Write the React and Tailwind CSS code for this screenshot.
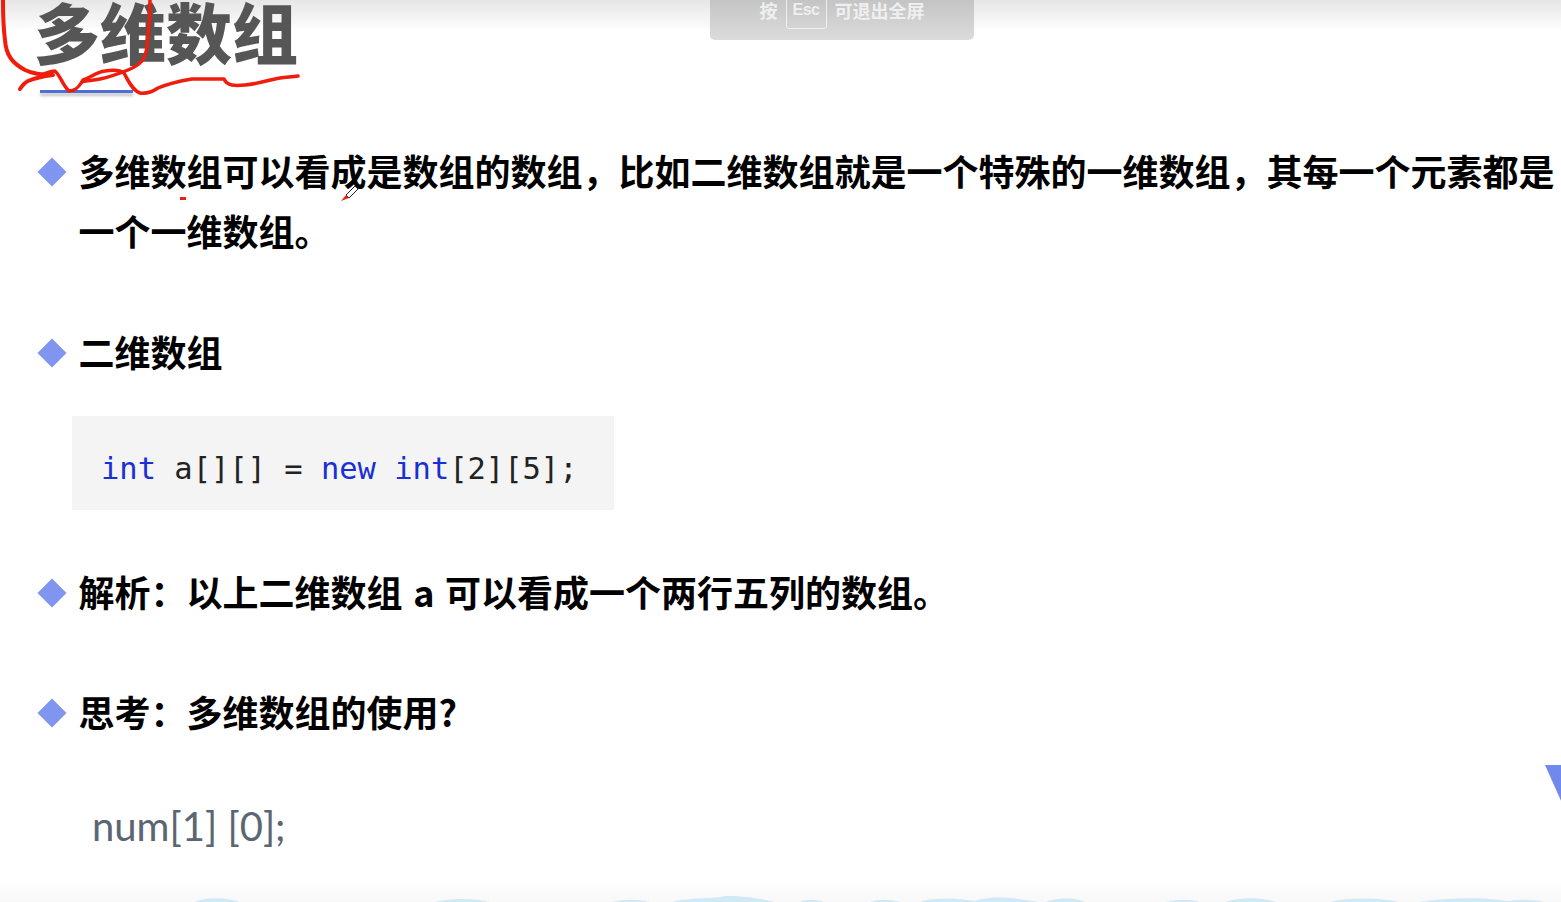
const cjk = "font-['Noto_Sans_CJK_SC','Noto_Sans',sans-serif]";

function Diamond() {
  return (
    <svg width="30" height="30" viewBox="0 0 30 30" className="shrink-0">
      <path d="M15 0.5 L29.5 15 L15 29.5 L0.5 15 Z" fill="#7f95ef" />
    </svg>
  );
}

function Bullet({ children, className = "" }) {
  return (
    <div className={"flex items-start gap-[11.5px] pl-[37px] " + className}>
      <div className="h-[60px] flex items-center shrink-0"><Diamond /></div>
      <p className="-mt-[2px] mb-[2px] text-[36px] leading-[60px] font-bold text-black [word-spacing:2.5px] whitespace-pre-wrap w-[1482px]">{children}</p>
    </div>
  );
}

function Ink() {
  return (
    <svg width="310" height="100" viewBox="0 0 310 100" className="absolute left-0 top-0" fill="none">
      <path
        d="M3 0 C3 10 3 25 5 40 C6 55 12 63 25 70 C33 74 42 75 53 75 C45 76 35 78 28 81 C24 83 22 86 20 89"
        stroke="#f01c0c" strokeWidth="4" strokeLinecap="round" strokeLinejoin="round"
      />
      <path
        d="M150 0 C150 15 149 30 147 45 C146 60 140 65 128 70 C118 74 110 77 100 79 C92 81 87 80 82 82"
        stroke="#f01c0c" strokeWidth="3.5" strokeLinecap="round" strokeLinejoin="round"
      />
      <path
        d="M40 75 C45 74 50 71 55 71 C60 75 63 86 69 91 C74 91 78 89 83 80 C90 78 96 72 105 71 C112 70 120 70 124 73 C128 80 132 90 140 93 C147 94 152 92 158 88 C170 83 180 81 192 79 C205 79 215 79 224 79 C227 86 235 86 245 85 C258 84 268 80 280 78 C287 77 293 77 298 76"
        stroke="#f01c0c" strokeWidth="3.5" strokeLinecap="round" strokeLinejoin="round"
      />
    </svg>
  );
}

function Pen() {
  return (
    <svg width="20" height="22" viewBox="0 0 20 22" className="absolute left-[340px] top-[182px]" fill="none">
      <path d="M6 13 L15 4 L18 7 L9 16 Z" fill="#fff" stroke="#222" strokeWidth="1" />
      <path d="M1 19 L6 13 L9 16 Z" fill="#ee2211" />
    </svg>
  );
}

function Waves() {
  return (
    <svg width="1561" height="6" viewBox="0 0 1561 6" className="block" fill="#cfeaf6">
      <path d="M195 6 C205 1 225 1 240 6 Z" />
      <path d="M435 6 C450 2 475 2 490 6 Z" />
      <path d="M612 6 C625 3 635 3 650 6 Z" />
      <path d="M672 6 C690 1 715 3 725 0 C735 -1 765 3 775 6 Z" />
      <path d="M800 6 C806 3 815 3 825 6 Z" />
      <path d="M870 6 C880 3 888 3 900 6 Z" />
      <path d="M920 6 C935 1 960 2 980 6 Z" />
      <path d="M972 6 C985 1 1000 0 1025 4 L1040 6 Z" />
      <path d="M1045 6 C1060 1 1075 1 1085 6 Z" />
      <path d="M1165 6 C1180 3 1190 3 1200 6 Z" />
      <path d="M1225 6 C1240 1 1265 1 1275 6 Z" />
      <path d="M1330 6 C1350 1 1380 2 1400 6 Z" />
      <path d="M1420 6 C1450 1 1490 1 1510 6 Z" />
      <path d="M1505 6 C1515 3 1530 3 1545 6 Z" />
    </svg>
  );
}

export default function App() {
  return (
    <div className={"relative w-[1561px] h-[902px] overflow-hidden bg-white flex flex-col " + cjk}>
      <div className="h-[90px] bg-gradient-to-b from-[#e6e6e6] via-[#ffffff] via-35% to-white pl-[34px] shrink-0">
        <h1 className="-mt-[3px] text-[66px] leading-[66px] font-black text-[#565656]">多维数组</h1>
        <div className="ml-[6px] mt-[27px] w-[93px] h-[3px] bg-[#4f6ed8] shadow-[0_3px_3px_rgba(120,120,110,0.45)]" />
      </div>

      <Bullet className="mt-[52px]">多维数组可以看成是数组的数组，比如二维数组就是一个特殊的一维数组，其每一个元素都是一个一维数组。</Bullet>
      <Bullet className="mt-[61px]">二维数组</Bullet>

      <div className="ml-[72px] mt-[33px] w-[542px] h-[94px] bg-[#f4f4f4] flex items-center pl-[29px] pt-[12px] shrink-0">
        <code className="text-[30.45px] leading-[40px] font-['DejaVu_Sans_Mono',monospace] text-[#222] whitespace-pre">
          <span className="text-[#1a2fd6]">int</span> a[][] = <span className="text-[#1a2fd6]">new</span> <span className="text-[#1a2fd6]">int</span>[2][5];
        </code>
      </div>

      <Bullet className="mt-[53px]">解析：以上二维数组 a 可以看成一个两行五列的数组。</Bullet>
      <Bullet className="mt-[60px]">思考：多维数组的使用?</Bullet>

      <p className="ml-[92px] mt-[59px] text-[40px] leading-[48px] font-['Lato','Open_Sans',sans-serif] text-[#5b6672]">num[1] [0];</p>

      <div className="mt-auto h-[22px] bg-gradient-to-b from-white to-[#f8f8f8] flex items-end shrink-0">
        <Waves />
      </div>

      <Ink />
      <Pen />
      <div className="absolute left-[180px] top-[197px] w-[6px] h-[3px] bg-[#e8200f]" />
      <svg width="17" height="40" viewBox="0 0 17 40" className="absolute left-[1545px] top-[765px]">
        <path d="M0 0 H17 V38 Z" fill="#7188ec" />
      </svg>

      <div className="absolute left-[710px] top-0 w-[264px] h-[40px] rounded-b-[5px] bg-gradient-to-b from-[#c4c4c4] to-[#dcdcdc] flex items-start justify-center gap-[8px] text-[#efefef] text-[18px] leading-[20px] font-bold">
        <span>按</span>
        <span className="w-[41px] h-[30px] -mt-[1px] border border-[#efefef] rounded-b-[3px] flex items-center justify-center text-[16px] pb-[8px] font-['Liberation_Sans',sans-serif] tracking-[-0.5px]">Esc</span>
        <span>可退出全屏</span>
      </div>
    </div>
  );
}
